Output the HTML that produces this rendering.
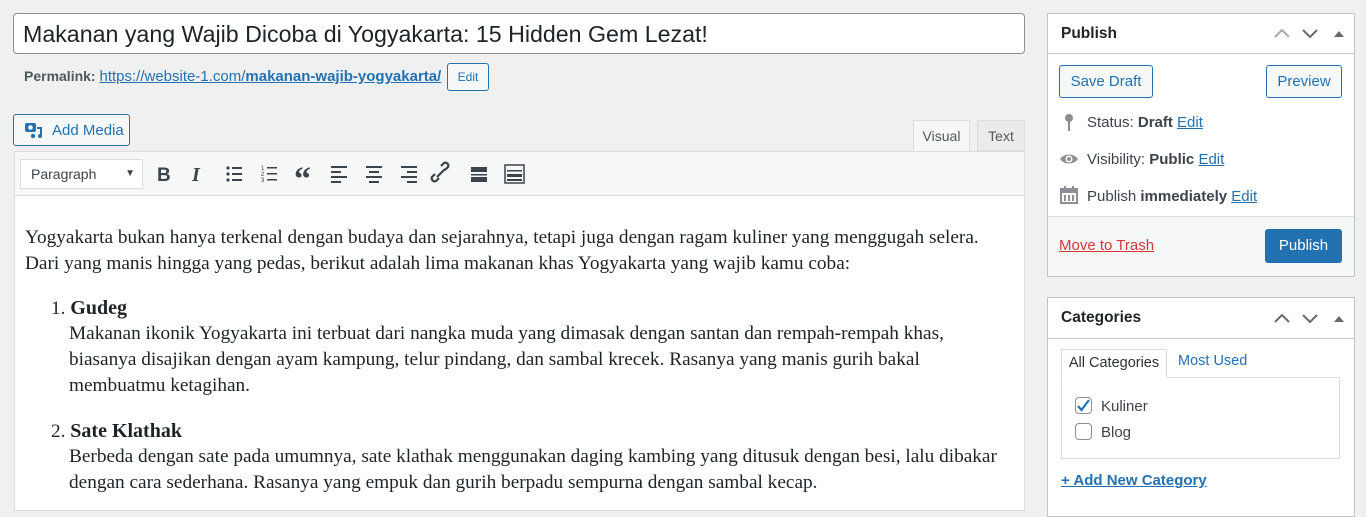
<!DOCTYPE html>
<html><head><meta charset="utf-8"><style>
*{box-sizing:border-box;margin:0;padding:0}
body{width:1366px;height:507px;overflow:hidden;background:#f0f0f1;font-family:"Liberation Sans",sans-serif;color:#1d2327;position:relative;font-size:14px}
.a{position:absolute}
a{color:#2271b1}
.btn{position:absolute;border:1px solid #2271b1;border-radius:3px;color:#2271b1;background:#f6f7f7;display:flex;align-items:center;justify-content:center}
.serif{font-family:"Liberation Serif",serif;font-size:19.3px;color:#1d2327;line-height:26px;white-space:nowrap}
</style></head><body>
<div class="a" style="left:13px;top:13px;width:1012px;height:41px;background:#fff;border:1px solid #8c8f94;border-radius:4px;font-size:23.2px;padding:7px 9px;color:#1d2327">Makanan yang Wajib Dicoba di Yogyakarta: 15 Hidden Gem Lezat!</div>
<div class="a" style="left:24px;top:68px;font-size:14px;color:#50575e;font-weight:bold">Permalink: <a style="font-weight:normal;font-size:15px" href="#">https://website-1.com/<b>makanan-wajib-yogyakarta/</b></a></div>
<div class="btn" style="left:447px;top:63px;width:42px;height:28px;font-size:12px">Edit</div>
<div class="btn" style="left:13px;top:114px;width:117px;height:32px;font-size:15px;justify-content:flex-start;padding-left:10px">
<svg width="20" height="20" viewBox="0 0 20 20" style="margin-right:8px"><rect x="1" y="3" width="11" height="9" rx="2" fill="#2271b1"/><circle cx="6.5" cy="7.5" r="2.3" fill="#f6f7f7"/><path d="M13 7h5v9a2 2 0 1 1-2-2V9h-3z" fill="#2271b1"/><circle cx="9" cy="16" r="2.2" fill="#2271b1"/></svg>Add Media</div>
<div class="a" style="left:913px;top:120px;width:57px;height:32px;background:#f6f7f7;border:1px solid #dcdcde;border-bottom:none;font-size:14px;color:#50575e;text-align:center;line-height:30px">Visual</div>
<div class="a" style="left:977px;top:120px;width:48px;height:31px;background:#ebebeb;border:1px solid #dcdcde;font-size:14px;color:#50575e;text-align:center;line-height:30px">Text</div>
<div class="a" style="left:14px;top:151px;width:1011px;height:360px;background:#fff;border:1px solid #dcdcde"></div>
<div class="a" style="left:15px;top:152px;width:1009px;height:44px;background:#f6f7f7;border-bottom:1px solid #dcdcde"></div>
<div class="a" style="left:20px;top:159px;width:123px;height:30px;background:#fff;border:1px solid #dcdcde;font-size:14px;color:#3c434a;padding:6px 10px">Paragraph<span style="position:absolute;right:7px;top:8px;font-size:10px">▼</span></div>
<svg class="a" style="left:150px;top:160px" width="380" height="28" viewBox="0 0 380 28" fill="#3c434a" stroke="#3c434a">
<text x="7" y="21" font-family="Liberation Sans" font-weight="bold" font-size="19" stroke="none">B</text>
<text x="42" y="21" font-family="Liberation Serif" font-style="italic" font-weight="bold" font-size="20" stroke="none">I</text>
<g stroke="none"><circle cx="78" cy="8" r="1.6"/><circle cx="78" cy="14" r="1.6"/><circle cx="78" cy="20" r="1.6"/><rect x="82" y="7" width="10" height="2"/><rect x="82" y="13" width="10" height="2"/><rect x="82" y="19" width="10" height="2"/>
<text x="111" y="10" font-size="6">1</text><text x="111" y="16" font-size="6">2</text><text x="111" y="22" font-size="6">3</text><rect x="117" y="7" width="10" height="1.5"/><rect x="117" y="13" width="10" height="1.5"/><rect x="117" y="19" width="10" height="1.5"/>
<text x="144" y="30" font-family="Liberation Serif" font-weight="bold" font-size="34">“</text>
<rect x="181" y="6" width="16" height="2"/><rect x="181" y="11" width="10" height="2"/><rect x="181" y="16" width="16" height="2"/><rect x="181" y="21" width="10" height="2"/>
<rect x="216" y="6" width="16" height="2"/><rect x="219" y="11" width="10" height="2"/><rect x="216" y="16" width="16" height="2"/><rect x="219" y="21" width="10" height="2"/>
<rect x="251" y="6" width="16" height="2"/><rect x="257" y="11" width="10" height="2"/><rect x="251" y="16" width="16" height="2"/><rect x="257" y="21" width="10" height="2"/>
<rect x="321" y="7" width="16" height="5"/><rect x="321" y="14" width="16" height="1.5"/><rect x="321" y="17" width="16" height="5"/>
<rect x="355" y="5" width="19" height="18" fill="none" stroke="#3c434a" stroke-width="1.5"/><rect x="357" y="10" width="15" height="1.5"/><rect x="357" y="14" width="15" height="3"/><rect x="357" y="19" width="15" height="2"/></g>
<path d="M289 18l-3 3a3 3 0 0 1-4-4l3-3M295 10l3-3a3 3 0 0 0-4-4l-3 3M287 17l8-8" fill="none" stroke-width="2.2"/>
</svg>
<div class="a serif" style="left:25px;top:225px">Yogyakarta bukan hanya terkenal dengan budaya dan sejarahnya, tetapi juga dengan ragam kuliner yang menggugah selera.<br>Dari yang manis hingga yang pedas, berikut adalah lima makanan khas Yogyakarta yang wajib kamu coba:</div>
<div class="a serif" style="left:51px;top:295px">1. <b style="font-size:20px">Gudeg</b></div>
<div class="a serif" style="left:69px;top:321px">Makanan ikonik Yogyakarta ini terbuat dari nangka muda yang dimasak dengan santan dan rempah-rempah khas,<br>biasanya disajikan dengan ayam kampung, telur pindang, dan sambal krecek. Rasanya yang manis gurih bakal<br>membuatmu ketagihan.</div>
<div class="a serif" style="left:51px;top:418px">2. <b style="font-size:20px">Sate Klathak</b></div>
<div class="a serif" style="left:69px;top:444px">Berbeda dengan sate pada umumnya, sate klathak menggunakan daging kambing yang ditusuk dengan besi, lalu dibakar<br>dengan cara sederhana. Rasanya yang empuk dan gurih berpadu sempurna dengan sambal kecap.</div>

<div class="a" style="left:1047px;top:13px;width:308px;height:264px;background:#fff;border:1px solid #c3c4c7"></div>
<div class="a" style="left:1048px;top:53px;width:306px;height:1px;background:#c3c4c7"></div>
<div class="a" style="left:1061px;top:25px;font-size:15.5px;font-weight:bold">Publish</div>
<div class="a" style="left:1272px;top:22px">
<svg width="80" height="22" viewBox="0 0 80 22"><path d="M3 15l7-7 7 7" fill="none" stroke="#a7aaad" stroke-width="2"/><path d="M31 8l7 7 7-7" fill="none" stroke="#646970" stroke-width="2"/><path d="M62 15l5-6 5 6z" fill="#646970"/></svg></div>
<div class="btn" style="left:1059px;top:65px;width:94px;height:33px;font-size:15px">Save Draft</div>
<div class="btn" style="left:1266px;top:65px;width:76px;height:33px;font-size:15px">Preview</div>
<div class="a" style="left:1063px;top:113px"><svg width="12" height="18"><circle cx="6" cy="5" r="4" fill="#8c8f94"/><rect x="5" y="8" width="2" height="10" fill="#8c8f94"/></svg></div>
<div class="a" style="left:1087px;top:114px;font-size:15px;color:#3c434a">Status: <b>Draft</b> <a href="#">Edit</a></div>
<div class="a" style="left:1059px;top:152px"><svg width="20" height="14"><path d="M1 7C5 1 15 1 19 7C15 13 5 13 1 7z" fill="#8c8f94"/><circle cx="10" cy="7" r="3.5" fill="#fff"/><circle cx="10" cy="7" r="2" fill="#8c8f94"/></svg></div>
<div class="a" style="left:1087px;top:151px;font-size:15px;color:#3c434a">Visibility: <b>Public</b> <a href="#">Edit</a></div>
<div class="a" style="left:1060px;top:186px"><svg width="18" height="18"><rect x="1" y="3" width="16" height="14" fill="none" stroke="#8c8f94" stroke-width="2"/><rect x="1" y="3" width="16" height="4" fill="#8c8f94"/><rect x="4" y="9" width="2" height="6" fill="#8c8f94"/><rect x="8" y="9" width="2" height="6" fill="#8c8f94"/><rect x="12" y="9" width="2" height="6" fill="#8c8f94"/><rect x="4" y="0" width="2" height="4" fill="#8c8f94"/><rect x="12" y="0" width="2" height="4" fill="#8c8f94"/></svg></div>
<div class="a" style="left:1087px;top:188px;font-size:15px;color:#3c434a">Publish <b>immediately</b> <a href="#">Edit</a></div>
<div class="a" style="left:1048px;top:216px;width:306px;height:60px;background:#f6f7f7;border-top:1px solid #dcdcde"></div>
<div class="a" style="left:1059px;top:237px;font-size:15px"><a href="#" style="color:#d63638">Move to Trash</a></div>
<div class="a" style="left:1265px;top:229px;width:77px;height:34px;background:#2271b1;border-radius:3px;color:#fff;font-size:15px;text-align:center;line-height:34px">Publish</div>

<div class="a" style="left:1047px;top:297px;width:308px;height:220px;background:#fff;border:1px solid #c3c4c7"></div>
<div class="a" style="left:1048px;top:338px;width:306px;height:1px;background:#c3c4c7"></div>
<div class="a" style="left:1061px;top:309px;font-size:15.5px;font-weight:bold">Categories</div>
<div class="a" style="left:1272px;top:307px"><svg width="80" height="22" viewBox="0 0 80 22"><path d="M3 15l7-7 7 7" fill="none" stroke="#646970" stroke-width="2"/><path d="M31 8l7 7 7-7" fill="none" stroke="#646970" stroke-width="2"/><path d="M62 15l5-6 5 6z" fill="#646970"/></svg></div>
<div class="a" style="left:1061px;top:377px;width:279px;height:82px;border:1px solid #dcdcde;background:#fff"></div>
<div class="a" style="left:1061px;top:349px;width:106px;height:29px;border:1px solid #dcdcde;border-bottom:1px solid #fff;background:#fff;font-size:14.5px;color:#2c3338;text-align:center;line-height:26px">All Categories</div>
<div class="a" style="left:1178px;top:353px;font-size:14.5px;color:#2271b1">Most Used</div>
<div class="a" style="left:1075px;top:397px;width:17px;height:17px;border:1px solid #8c8f94;border-radius:4px"><svg width="15" height="15" style="position:absolute;left:0;top:0"><path d="M2 8l3.5 4L13 2" fill="none" stroke="#2271b1" stroke-width="2.2"/></svg></div>
<div class="a" style="left:1101px;top:398px;font-size:15px;color:#3c434a">Kuliner</div>
<div class="a" style="left:1075px;top:423px;width:17px;height:17px;border:1px solid #8c8f94;border-radius:4px"></div>
<div class="a" style="left:1101px;top:424px;font-size:15px;color:#3c434a">Blog</div>
<div class="a" style="left:1061px;top:472px;font-size:15px;font-weight:bold"><a href="#">+ Add New Category</a></div>
</body></html>
